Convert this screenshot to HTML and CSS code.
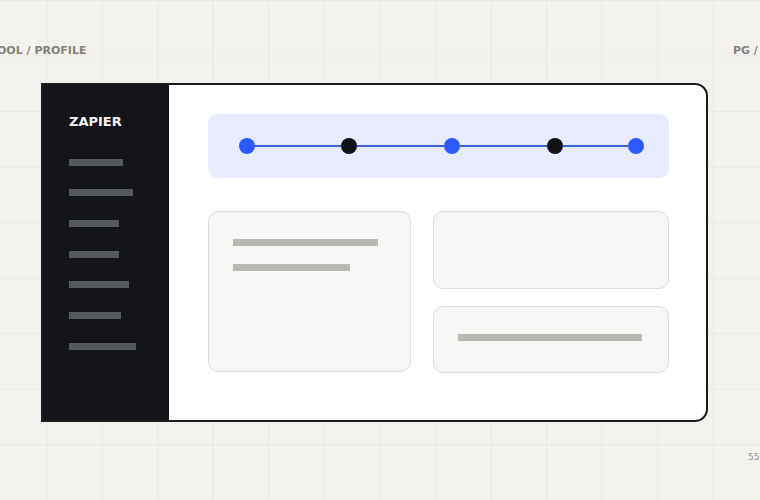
FILE: index.html
```html
<!DOCTYPE html>
<html lang="en">
<head>
<meta charset="utf-8">
<title>Zapier profile</title>
<link rel="stylesheet" href="styles.css">
</head>
<body>
<div class="page">
  <header class="topbar">
    <span class="crumb">TOOL / PROFILE</span>
    <span class="pager">PG / 02</span>
  </header>

  <div class="app">
    <aside class="sidebar">
      <div class="brand">ZAPIER</div>
      <ul class="nav">
        <li class="nav-item" style="width:54px"></li>
        <li class="nav-item" style="width:64px"></li>
        <li class="nav-item" style="width:50px"></li>
        <li class="nav-item" style="width:50px"></li>
        <li class="nav-item" style="width:60px"></li>
        <li class="nav-item" style="width:52px"></li>
        <li class="nav-item" style="width:67px"></li>
      </ul>
    </aside>

    <main class="main">
      <section class="timeline">
        <span class="dot dot-blue"></span>
        <span class="seg" style="width:86px"></span>
        <span class="dot dot-dark"></span>
        <span class="seg" style="width:87px"></span>
        <span class="dot dot-blue"></span>
        <span class="seg" style="width:87px"></span>
        <span class="dot dot-dark"></span>
        <span class="seg" style="width:65px"></span>
        <span class="dot dot-blue"></span>
      </section>

      <section class="cards">
        <div class="card card-tall">
          <div class="line" style="width:145px"></div>
          <div class="line line-second" style="width:117px"></div>
        </div>
        <div class="stack">
          <div class="card card-top"></div>
          <div class="card card-bottom">
            <div class="line" style="width:184px"></div>
          </div>
        </div>
      </section>
    </main>
  </div>

  <footer class="foot">55</footer>
</div>
</body>
</html>
```

FILE: styles.css
```css
* {
  box-sizing: border-box;
}

html, body {
  margin: 0;
  padding: 0;
  overflow: hidden;
}

body {
  font-family: "DejaVu Sans", "Liberation Sans", sans-serif;
  background: #f2f1ed;
}

.page {
  width: 760px;
  height: 500px;
  padding-top: 44px;
  overflow: hidden;
  background-color: #f2f1ed;
  background-image:
    linear-gradient(to right, #e9e7e2 1px, transparent 1px),
    linear-gradient(to bottom, #e9e7e2 1px, transparent 1px);
  background-size: 55.56px 55.56px;
  background-position: 46.2px 0, 0 0;
}

/* top breadcrumb row */
.topbar {
  display: flex;
  justify-content: space-between;
  margin: 0 -17px 0 -10.5px;
  font-size: 11px;
  line-height: 13px;
  font-weight: bold;
  color: #85827b;
}

/* the app frame */
.app {
  display: flex;
  height: 339px;
  margin: 26px 52px 0 41px;
  border: 2px solid #1b1b1e;
  border-radius: 0 13px 13px 0;
  background: #ffffff;
  overflow: hidden;
}

.sidebar {
  width: 126px;
  flex: none;
  background: #14151b;
  padding: 29px 0 0 26px;
}

.brand {
  font-size: 13px;
  line-height: 16px;
  font-weight: bold;
  color: #f4f4f4;
}

.nav {
  list-style: none;
  margin: 28.5px 0 0;
  padding: 0;
  display: flex;
  flex-direction: column;
  gap: 23.7px;
}

.nav-item {
  height: 7px;
  background: #56585f;
}

.main {
  flex: 1;
  padding: 29px 37px 0 39px;
}

/* progress track */
.timeline {
  display: flex;
  align-items: center;
  height: 64px;
  padding-left: 31px;
  background: #e8ebfd;
  border-radius: 10px;
}

.dot {
  width: 16px;
  height: 16px;
  border-radius: 50%;
  flex: none;
}

.dot-blue {
  background: #2e5bff;
}

.dot-dark {
  background: #111216;
}

.seg {
  height: 2px;
  flex: none;
  background: #3c62dc;
}

/* content cards */
.cards {
  display: grid;
  grid-template-columns: 203px 236px;
  gap: 22px;
  margin-top: 33px;
}

.card {
  background: #f6f6f4;
  border: 1px solid #dedcd7;
  border-radius: 10px;
}

.card-tall {
  height: 161px;
  padding: 27px 0 0 23.7px;
}

.line {
  height: 7px;
  background: #b9b8b3;
}

.line-second {
  margin-top: 17.5px;
}

.stack {
  display: flex;
  flex-direction: column;
  gap: 16.7px;
}

.card-top {
  height: 78px;
}

.card-bottom {
  height: 67px;
  display: flex;
  align-items: center;
  padding: 0 0 4px 23.7px;
}

.foot {
  margin-top: 30px;
  text-align: right;
  padding-right: 0.5px;
  font-size: 9px;
  line-height: 11px;
  color: #9a978f;
}
```
